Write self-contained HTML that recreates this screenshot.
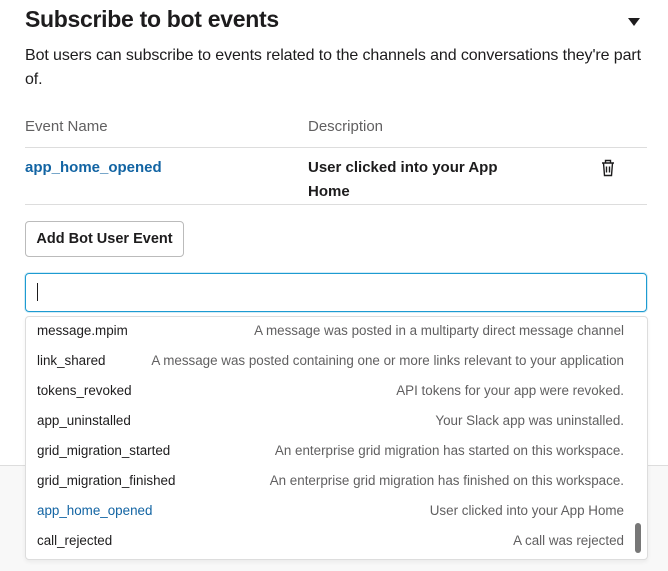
<!DOCTYPE html>
<html><head><style>
body{margin:0;width:668px;height:571px;overflow:hidden;background:#f8f8f8;font-family:"Liberation Sans",sans-serif;color:#1d1c1d;position:relative}
.card{position:absolute;left:0;top:0;width:668px;height:465px;background:#fff;border-bottom:1px solid #ddd}
.a{position:absolute;white-space:nowrap}
.dd{position:absolute;left:25px;top:316px;width:621px;height:242px;background:#fff;border:1px solid #ddd;border-radius:4px;box-shadow:0 2px 4px rgba(0,0,0,.06)}
.r{position:absolute;left:11px;width:587px;font-size:13.4px;height:30px;line-height:28px}
.r span{float:right;color:#616061}
</style></head><body>
<div class="card"></div>
<div class="a" style="left:25px;top:6px;font-size:23px;font-weight:bold;letter-spacing:-0.3px">Subscribe to bot events</div>
<div class="a" style="left:628px;top:18px;width:0;height:0;border-left:6px solid transparent;border-right:6px solid transparent;border-top:8px solid #1d1c1d"></div>
<div class="a" style="left:25px;top:44px;font-size:16px;line-height:24px;white-space:normal;width:620px;letter-spacing:-0.1px">Bot users can subscribe to events related to the channels and conversations they're part of.</div>
<div class="a" style="left:25px;top:118px;font-size:15px;color:#616061">Event Name</div>
<div class="a" style="left:308px;top:118px;font-size:15px;color:#616061">Description</div>
<div class="a" style="left:25px;top:147px;width:622px;height:1px;background:#ddd"></div>
<div class="a" style="left:25px;top:159px;font-size:15px;font-weight:bold;color:#1264a3">app_home_opened</div>
<div class="a" style="left:308px;font-size:15px;font-weight:bold;line-height:24px;top:156px">User clicked into your App<br>Home</div>
<svg class="a" style="left:601px;top:159px" width="14" height="18" viewBox="0 0 14 18"><path d="M1 4h12M4.5 4V1.5h5V4M2.5 4l1 12.5h7l1-12.5M5.5 7.5v6M8.5 7.5v6" fill="none" stroke="#1d1c1d" stroke-width="1.4"/></svg>
<div class="a" style="left:25px;top:204px;width:622px;height:1px;background:#ddd"></div>
<div class="a" style="left:25px;top:221px;width:157px;height:34px;border:1px solid #bbb;border-radius:4px;font-size:14.5px;font-weight:bold;line-height:34px;text-align:center">Add Bot User Event</div>
<div class="a" style="left:25px;top:273px;width:620px;height:37px;border:1px solid #1d9bd1;border-radius:4px;box-shadow:0 0 0 1px rgba(29,155,209,.2)"></div>
<div class="a" style="left:37px;top:283px;width:1px;height:18px;background:#1d1c1d"></div>
<div class="dd">
<div class="r" style="top:0">message.mpim<span>A message was posted in a multiparty direct message channel</span></div>
<div class="r" style="top:30px">link_shared<span>A message was posted containing one or more links relevant to your application</span></div>
<div class="r" style="top:60px">tokens_revoked<span>API tokens for your app were revoked.</span></div>
<div class="r" style="top:90px">app_uninstalled<span>Your Slack app was uninstalled.</span></div>
<div class="r" style="top:120px">grid_migration_started<span>An enterprise grid migration has started on this workspace.</span></div>
<div class="r" style="top:150px">grid_migration_finished<span>An enterprise grid migration has finished on this workspace.</span></div>
<div class="r" style="top:180px;color:#1264a3">app_home_opened<span>User clicked into your App Home</span></div>
<div class="r" style="top:210px">call_rejected<span>A call was rejected</span></div>
<div style="position:absolute;left:609px;top:206px;width:6px;height:30px;border-radius:3px;background:#777"></div>
</div>
</body></html>
